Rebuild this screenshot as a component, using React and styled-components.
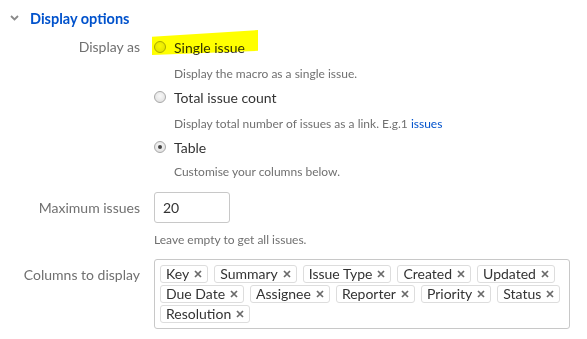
import React from 'react';
import styled, { createGlobalStyle } from 'styled-components';

const GlobalStyle = createGlobalStyle`
  body {
    margin: 0;
    background: #ffffff;
    font-family: Lato, "Liberation Sans", sans-serif;
    font-size: 14px;
    color: #333333;
  }
`;

const Page = styled.div`
  padding: 8px 0 0 0;
  width: 587px;
`;

const SectionHeader = styled.div`
  display: flex;
  align-items: center;
  height: 20px;
  padding-left: 10px;
  gap: 11px;
  color: #0052cc;
  font-weight: 700;
  font-size: 14.5px;
`;

const Form = styled.div`
  display: grid;
  grid-template-columns: 140px 1fr;
  column-gap: 14px;
  margin-top: 9px;
`;

const Label = styled.div`
  text-align: right;
  color: #707070;
  line-height: ${p => p.$lh || 20}px;
  padding-top: ${p => p.$pt || 0}px;
`;

const Field = styled.div`
  display: flex;
  flex-direction: column;
  margin-bottom: ${p => p.$mb || 0}px;
`;

const Option = styled.label`
  position: relative;
  display: flex;
  align-items: center;
  gap: 8px;
  height: 20px;
  margin-top: ${p => p.$first ? 0 : 5}px;
  color: #333333;
`;

const Highlight = styled.span`
  position: absolute;
  left: -2px;
  top: -7px;
  width: 106px;
  height: 26px;
  background: #ffff00;
  mix-blend-mode: multiply;
  clip-path: polygon(0 26%, 100% 0, 100% 80%, 0 96%);
`;

const Radio = styled.span`
  box-sizing: border-box;
  width: 12px;
  height: 12px;
  border-radius: 50%;
  border: 1px solid #a8a8a8;
  background: radial-gradient(circle at 50% 40%, #f8f8f8, #dcdcdc);
  display: flex;
  align-items: center;
  justify-content: center;
  &::after {
    content: '';
    width: 4px;
    height: 4px;
    border-radius: 50%;
    background: ${p => p.$checked ? '#444444' : 'transparent'};
  }
`;

const Desc = styled.div`
  font-size: 12px;
  line-height: 16px;
  color: #707070;
  margin-top: ${p => p.$mt ?? 9}px;
  padding-left: ${p => p.$indent ? 20 : 0}px;
`;

const Link = styled.a`
  color: #0052cc;
  text-decoration: none;
`;

const NumberInput = styled.input`
  box-sizing: border-box;
  width: 76px;
  height: 31px;
  border: 1px solid #c8c8c8;
  border-radius: 3px;
  padding: 0 8px;
  font: inherit;
  color: #333333;
  outline: none;
`;

const TagBox = styled.div`
  box-sizing: border-box;
  width: 416px;
  border: 1px solid #c8c8c8;
  border-radius: 3px;
  padding: 5px;
  display: flex;
  flex-wrap: wrap;
  gap: 2px 6px;
  min-height: 67px;
  align-content: flex-start;
`;

const Tag = styled.span`
  display: inline-flex;
  align-items: center;
  gap: 5px;
  height: 18px;
  box-sizing: border-box;
  padding: 0 5px;
  border: 1px solid #dddddd;
  border-radius: 3px;
  color: #333333;
  line-height: 16px;
`;

const Chevron = () => (
  <svg width="9" height="6" viewBox="0 0 9 6">
    <path d="M1 1 L4.5 4.5 L8 1" fill="none" stroke="#8a8a8a" strokeWidth="1.8" />
  </svg>
);

const Cross = () => (
  <svg width="8" height="8" viewBox="0 0 8 8">
    <path d="M1 1 L7 7 M7 1 L1 7" stroke="#6a6a6a" strokeWidth="1.7" />
  </svg>
);

const columns = [
  'Key', 'Summary', 'Issue Type', 'Created', 'Updated',
  'Due Date', 'Assignee', 'Reporter', 'Priority', 'Status', 'Resolution',
];

export default function App() {
  return (
    <Page>
      <GlobalStyle />
      <SectionHeader>
        <Chevron />
        <span>Display options</span>
      </SectionHeader>
      <Form>
        <Label>Display as</Label>
        <Field $mb={12}>
          <Option $first>
            <Highlight />
            <Radio />
            <span>Single issue</span>
          </Option>
          <Desc $indent>Display the macro as a single issue.</Desc>
          <Option>
            <Radio />
            <span>Total issue count</span>
          </Option>
          <Desc $indent>
            Display total number of issues as a link. E.g.1 <Link>issues</Link>
          </Desc>
          <Option>
            <Radio $checked />
            <span>Table</span>
          </Option>
          <Desc $indent $mt={7}>Customise your columns below.</Desc>
        </Field>

        <Label $lh={31}>Maximum issues</Label>
        <Field $mb={11}>
          <NumberInput defaultValue="20" />
          <Desc $mt={9}>Leave empty to get all issues.</Desc>
        </Field>

        <Label $pt={6}>Columns to display</Label>
        <Field>
          <TagBox>
            {columns.map(c => (
              <Tag key={c}>
                {c}
                <Cross />
              </Tag>
            ))}
          </TagBox>
        </Field>
      </Form>
    </Page>
  );
}
